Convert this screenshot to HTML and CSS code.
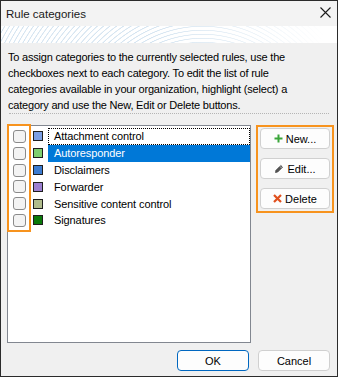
FILE: index.html
```html
<!DOCTYPE html>
<html>
<head>
<meta charset="utf-8">
<link rel="stylesheet" href="styles.css">
</head>
<body>
<div class="window">
  <div class="titlebar">
    <span class="title">Rule categories</span>
    <svg class="close" width="11" height="11" viewBox="0 0 11 11"><path d="M0.5 0.5L10.5 10.5M10.5 0.5L0.5 10.5" stroke="#1a1a1a" stroke-width="1.1"/></svg>
  </div>
  <div class="banner"></div>
  <div class="content">
    <p class="intro">To assign categories to the currently selected rules, use the checkboxes next to each category. To edit the list of rule categories available in your organization, highlight (select) a category and use the New, Edit or Delete buttons.</p>
    <div class="sep"></div>
    <div class="main">
      <div class="listbox">
        <div class="checks">
          <span class="cb"></span><span class="cb"></span><span class="cb"></span><span class="cb"></span><span class="cb"></span><span class="cb"></span>
        </div>
        <ul class="items">
          <li class="item focus"><span class="sw" style="background:#7b9fe4"></span><span class="lbl">Attachment control</span></li>
          <li class="item sel"><span class="sw" style="background:#7fcf6f"></span><span class="lbl">Autoresponder</span></li>
          <li class="item"><span class="sw" style="background:#3b7bd0"></span><span class="lbl">Disclaimers</span></li>
          <li class="item"><span class="sw" style="background:#9b7fd0"></span><span class="lbl">Forwarder</span></li>
          <li class="item"><span class="sw" style="background:#b0bc8c"></span><span class="lbl">Sensitive content control</span></li>
          <li class="item"><span class="sw" style="background:#0a7a0a"></span><span class="lbl">Signatures</span></li>
        </ul>
      </div>
      <div class="side">
        <button class="btn"><svg width="9" height="9" viewBox="0 0 9 9"><path d="M4.5 0.5V8.5M0.5 4.5H8.5" stroke="#3aa63a" stroke-width="2"/></svg>New...</button>
        <button class="btn"><svg width="10" height="10" viewBox="0 0 10 10"><path d="M1.5 8.5L2 6.3L6.8 1.5L8.5 3.2L3.7 8L1.5 8.5Z" fill="#555" stroke="#444" stroke-width="0.8" stroke-linejoin="round"/><path d="M6 2.4L7.6 4" stroke="#f0f0f0" stroke-width="0.7"/></svg>Edit...</button>
        <button class="btn"><svg width="9" height="9" viewBox="0 0 9 9"><path d="M1 1L8 8M8 1L1 8" stroke="#e0501e" stroke-width="2.2"/></svg>Delete</button>
      </div>
    </div>
    <div class="footer">
      <button class="btn ok">OK</button>
      <button class="btn">Cancel</button>
    </div>
  </div>
</div>
</body>
</html>
```
FILE: styles.css
```css
html, body { margin: 0; padding: 0; }
body { font-family: "Liberation Sans", Arial, sans-serif; font-size: 11px; color: #000; }
.window {
  width: 338px; height: 377px; box-sizing: border-box;
  border: 1px solid #2b2b2b;
  background: #f0f0f0;
  display: flex; flex-direction: column;
}
.titlebar {
  height: 25px; flex: none;
  background: #f3f3f3;
  display: flex; align-items: center; justify-content: space-between;
  padding: 0 6px 0 5px;
}
.title { font-size: 11.5px; color: #1a1a1a; }
.close { display: block; margin-top: -3px; }
.banner {
  height: 17px; flex: none;
  background-color: #fff;
  background-image:
    linear-gradient(90deg, rgba(255,255,255,0) 0%, rgba(255,255,255,0) 45%, rgba(255,255,255,1) 96%),
    repeating-radial-gradient(circle at 60% 700%, #fff 0px, #fff 2px, #d6e5f1 2.5px, #d6e5f1 3px, #fff 3.5px, #fff 4px);
}
.content { flex: 1; display: flex; flex-direction: column; padding: 0 3px 0 6px; }
.intro { margin: 6px 0 0 1px; width: 300px; line-height: 16px; color: #000; letter-spacing: -0.2px; }
.sep { margin: 0 5px 0 2px; border-top: 1px dotted #b5b5b5; height: 0; }
.main { display: flex; margin-top: 11px; height: 218px; flex: none; }
.listbox {
  width: 244px; box-sizing: border-box; flex: none;
  border: 1px solid #828790; background: #fff;
  display: flex; padding: 0;
}
.checks {
  width: 24px; box-sizing: border-box; height: 108px;
  margin: -2px 0 0 -1px;
  border: 2px solid #f7931e;
  display: flex; flex-direction: column; align-items: center;
  padding-top: 4px; gap: 3.8px;
}
.cb {
  width: 13px; height: 13px; box-sizing: border-box; flex: none;
  border: 1px solid #8a8a8a; border-radius: 3px; background: #f3f3f3;
}
.items { list-style: none; margin: 2px 0 0 0; padding: 0; flex: 1; letter-spacing: -0.1px; }
.item { height: 16.8px; display: flex; align-items: center; box-sizing: border-box; }
.sw { width: 10px; height: 10px; box-sizing: border-box; border: 1px solid #1e1e1e; margin: 0 5px 0 2px; flex: none; }
.lbl { flex: 1; height: 100%; display: flex; align-items: center; padding-left: 6px; box-sizing: border-box; white-space: nowrap; }
.focus .lbl { outline: 1px dotted #000; outline-offset: -1px; }
.sel .lbl { background: #0078d7; color: #fff; }
.side {
  margin-left: 5px; width: 78px; height: 88px; box-sizing: border-box; flex: none;
  border: 2px solid #f7931e;
  display: flex; flex-direction: column; align-items: center; gap: 9px; padding-top: 1px;
}
.btn {
  font-family: inherit; font-size: 11px; color: #000;
  width: 70px; height: 21px; box-sizing: border-box;
  background: #fdfdfd; border: 1px solid #d0d0d0; border-radius: 4px;
  display: flex; align-items: center; justify-content: center; gap: 3px; padding: 0; flex: none;
}
.btn svg { display: block; }
.footer { display: flex; justify-content: flex-end; gap: 9px; margin-top: 7px; padding-right: 4px; }
.footer .btn { width: 72px; height: 21px; }
.ok { border-color: #0067c0; }
```
